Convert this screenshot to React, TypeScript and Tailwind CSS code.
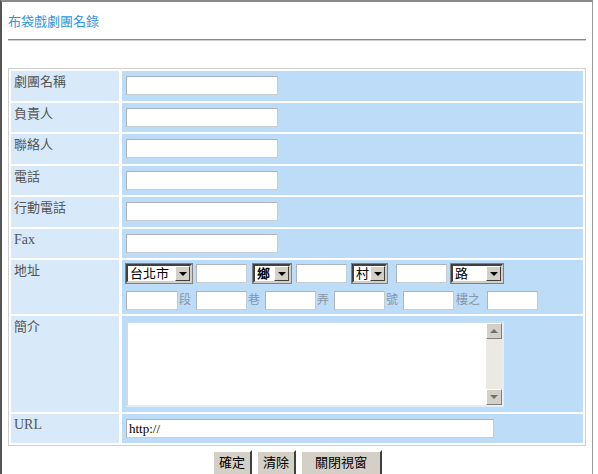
import React from 'react';

const FONT = '[font-family:"Liberation_Serif","Noto_Sans_CJK_TC",serif]';

// plain single-line field in the blue cells
function Field({ w = 'w-[152px]', value }: { w?: string; value?: string }) {
  return (
    <div
      className={`${w} h-[19px] shrink-0 bg-white border border-[#c4ccd6] border-t-[#aab4c0] border-l-[#aab4c0] text-[13px] leading-[17px] pl-[2px] text-black`}
    >
      {value}
    </div>
  );
}

// old-style windows dropdown
function Dropdown({ w, label, bold }: { w: string; label: string; bold?: boolean }) {
  return (
    <div
      className={`${w} h-[19px] shrink-0 flex items-stretch bg-white border-2 border-t-[#404040] border-l-[#404040] border-r-[#d4d0c8] border-b-[#d4d0c8] outline outline-1 outline-[#808080]`}
    >
      <span className={`flex-1 text-[13px] leading-[15px] pl-[2px] text-black ${bold ? 'font-bold' : ''}`}>
        {label}
      </span>
      <span className="w-[15px] bg-[#d4d0c8] border border-t-white border-l-white border-r-[#404040] border-b-[#404040] flex items-center justify-center">
        <span className="w-0 h-0 border-l-[4px] border-r-[4px] border-t-[4px] border-l-transparent border-r-transparent border-t-black" />
      </span>
    </div>
  );
}

function Row({ label, h = 'h-[29.5px]', latin, children }: { label: string; h?: string; latin?: boolean; children: React.ReactNode }) {
  return (
    <div className={`flex gap-[3px] ${h}`}>
      <div className={`w-[108px] shrink-0 bg-[#d8e9f9] text-[#555] ${latin ? 'text-[14px]' : 'text-[13px]'} leading-[16px] pl-[3px] pt-[3px]`}>
        {label}
      </div>
      <div className="flex-1 bg-[#bcdcf8] pl-[4px] pt-[5px]">{children}</div>
    </div>
  );
}

function Unit({ c }: { c: string }) {
  return <span className="text-[12px] text-[#8a96a4] leading-[20px] w-[18px] shrink-0 pl-[1px]">{c}</span>;
}

export default function App() {
  return (
    <div className={`w-[598px] h-[474px] bg-white overflow-hidden ${FONT}`}>
      <div className="w-[593px] h-[480px] border-l-2 border-t-2 border-r border-l-[#555] border-t-[#8a8a8a] border-r-[#999] pl-[6px] pr-[6px]">
        <div className="pt-[10px] text-[13px] leading-[18px] text-[#2f95e0] [font-family:'Noto_Sans_CJK_TC',sans-serif]">
          布袋戲劇團名錄
        </div>
        <div className="mt-[9px] border-t border-b border-t-[#888] border-b-[#d0d0d0]" />

        <div className="mt-[27px] border border-[#d0d0d0] p-[2px] flex flex-col gap-[2px]">
          <Row label="劇團名稱">
            <Field />
          </Row>
          <Row label="負責人">
            <Field />
          </Row>
          <Row label="聯絡人">
            <Field />
          </Row>
          <Row label="電話">
            <Field />
          </Row>
          <Row label="行動電話">
            <Field />
          </Row>
          <Row label="Fax" latin>
            <Field />
          </Row>
          <div className="flex gap-[3px] h-[54px]">
            <div className="w-[108px] shrink-0 bg-[#d8e9f9] text-[#555] text-[13px] leading-[16px] pl-[3px] pt-[3px]">
              地址
            </div>
            <div className="flex-1 bg-[#bcdcf8] pl-[4px] pt-[4px] flex flex-col gap-[7px]">
              <div className="flex items-center h-[19px]">
                <Dropdown w="w-[66px]" label="台北市" />
                <div className="ml-[4px]"><Field w="w-[51px]" /></div>
                <div className="ml-[6px]"><Dropdown w="w-[38px]" label="鄉" bold /></div>
                <div className="ml-[5px]"><Field w="w-[51px]" /></div>
                <div className="ml-[5px]"><Dropdown w="w-[35px]" label="村" /></div>
                <div className="ml-[9px]"><Field w="w-[51px]" /></div>
                <div className="ml-[4px]"><Dropdown w="w-[52px]" label="路" /></div>
              </div>
              <div className="flex items-center h-[20px]">
                <Field w="w-[52px]" />
                <Unit c="段" />
                <Field w="w-[51px]" />
                <Unit c="巷" />
                <Field w="w-[51px]" />
                <Unit c="弄" />
                <Field w="w-[51px]" />
                <Unit c="號" />
                <Field w="w-[51px]" />
                <span className="text-[12px] text-[#8a96a4] leading-[20px] w-[33px] shrink-0 pl-[2px]">樓之</span>
                <Field w="w-[51px]" />
              </div>
            </div>
          </div>
          <Row label="簡介" h="h-[96px]">
            <div className="w-[378px] h-[86px] bg-white border-2 border-[#c8dcf0] border-r-[#e4eef8] border-b-[#e4eef8] flex justify-end">
              <div className="w-[16px] h-full flex flex-col bg-[#ebe9e3] bg-[radial-gradient(#c8c6c0_0.6px,transparent_0.7px)] bg-[length:2px_2px]">
                <div className="w-[16px] h-[16px] bg-[#d4d0c8] border border-t-white border-l-white border-r-[#808080] border-b-[#808080] flex items-center justify-center">
                  <span className="w-0 h-0 border-l-[4px] border-r-[4px] border-b-[4px] border-l-transparent border-r-transparent border-b-[#707070]" />
                </div>
                <div className="flex-1" />
                <div className="w-[16px] h-[16px] bg-[#d4d0c8] border border-t-white border-l-white border-r-[#808080] border-b-[#808080] flex items-center justify-center">
                  <span className="w-0 h-0 border-l-[4px] border-r-[4px] border-t-[4px] border-l-transparent border-r-transparent border-t-[#707070]" />
                </div>
              </div>
            </div>
          </Row>
          <Row label="URL" h="h-[29px]" latin>
            <Field w="w-[368px]" value="http://" />
          </Row>
        </div>

        <div className="mt-[4px] flex justify-center gap-[4px]">
          {['確定', '清除', '關閉視窗'].map((b) => (
            <div
              key={b}
              className={`${b.length > 2 ? 'w-[82px]' : 'w-[40px]'} h-[28px] bg-[#d4d0c8] border-2 border-t-white border-l-white border-r-[#404040] border-b-[#404040] text-[13px] leading-[20px] text-black text-center [font-family:'Noto_Sans_CJK_TC',sans-serif]`}
            >
              {b}
            </div>
          ))}
        </div>
      </div>
    </div>
  );
}
